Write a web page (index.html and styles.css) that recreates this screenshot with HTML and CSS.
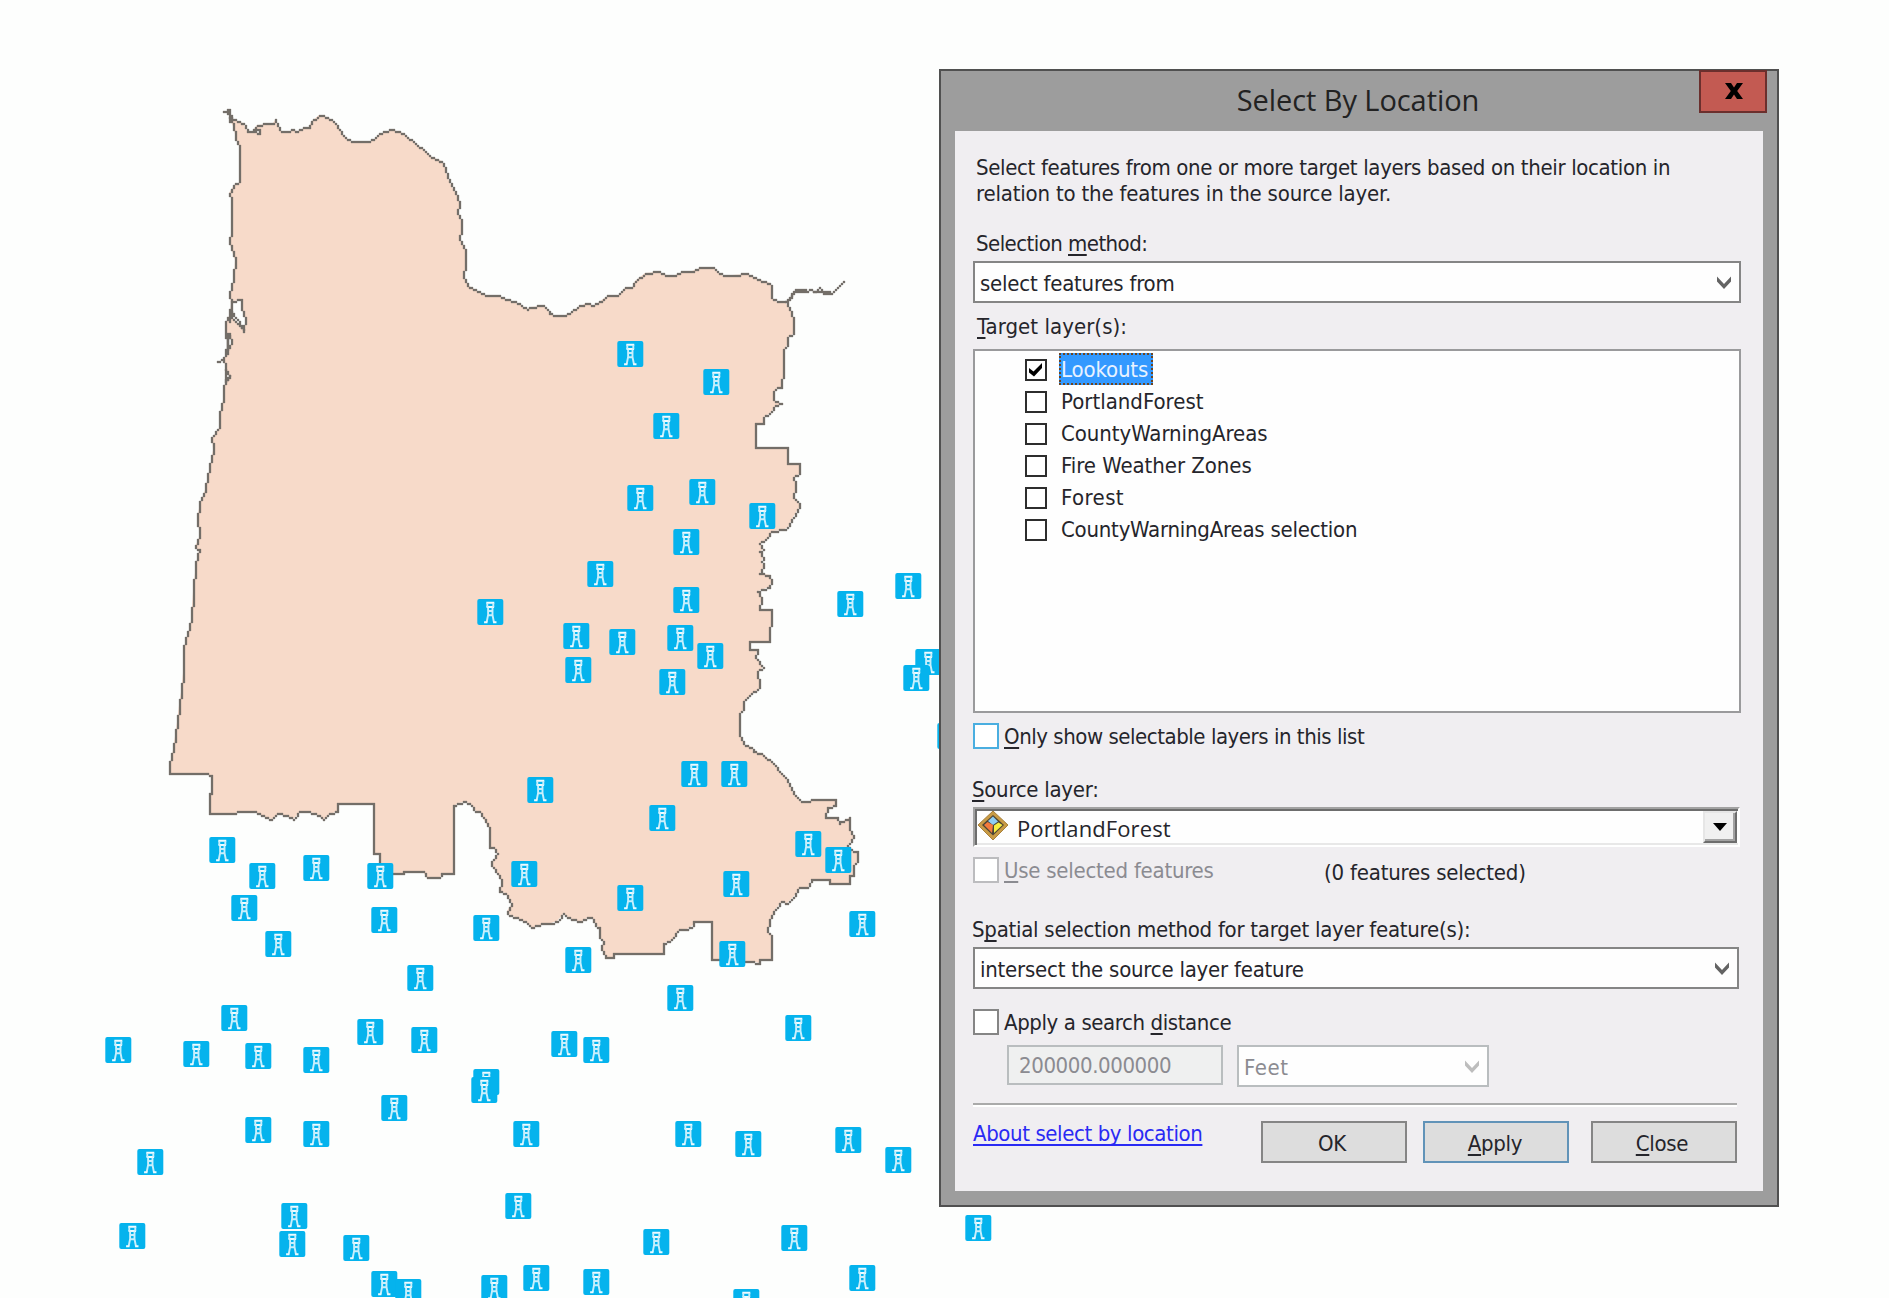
FILE: index.html
```html
<!DOCTYPE html>
<html lang="en">
<head>
<meta charset="utf-8">
<title>Select By Location</title>
<link rel="stylesheet" href="styles.css">
</head>
<body>
<main class="desktop">
<svg class="map" viewBox="0 0 1889 1298" width="1889" height="1298" aria-hidden="true">
  <defs>
    <g id="t">
      <rect class="pin" x="-13" y="-13" width="26" height="26" rx="2"/>
      <path class="tower" d="M-4-9.300H4M-3.800-5H3.800" stroke-width="2"/>
      <path class="tower thin" d="M-3-9V-5M3-9V-5M-2.200-4.500L-2.200 3L-3.600 10M2.200-4.500L2.200 3L3.600 10M-2.400-1H2.400M-2.600 3.200H2.600"/>
      <path class="tower" d="M-6.200 10.200H-2.800M2.800 10.200H6.200" stroke-width="2"/>
    </g>
  </defs>
  <path class="land" data-outline d="M229 118L243 123L247 131L253 132L260 133L259 129L254 129L257 125L268 124L273 123L275 120L277 125L282 132L290 131L292 130L298 131L304 128L309 127L311 122L319 115L321 116L328 117L333 121L340 129L343 135L351 142H368L374 140L380 134L386 132L392 130L397 131L403 133L415 143L423 149L432 157L442 161L446 170L447 177L453 189L458 197L460 204L458 213L462 222V230L460 240L466 250V264L464 278L468 285L477 291L487 296H498L507 300L519 304L527 309L530 307L543 306L547 309L550 314L555 316H563L572 312L580 306L587 303L594 306L603 299L608 296H618L625 288L632 288L635 281L645 273L657 272L667 275L673 276L682 272L692 271L700 268H714L718 272L723 276L732 275L748 274L757 279L770 283L772 287V298L777 302H785L792 312L794 322L793 334L788 337L787 345L784 350V368L782 387L777 388L774 392V400L782 404L776 406L770 413L764 417V424H756V448H788V464H800V473L794 478L796 486L794 497L798 501L800 506L793 517L788 527L783 530L772 531L768 538L760 544L763 549L760 552L763 557L761 562L764 566L760 573L770 575L772 581L769 587L758 591L762 597L759 610H772L770 642H750V649L757 650L756 657L763 667L758 672L760 688L750 695L744 702L743 710L740 713V735L745 745L752 747L753 752L762 753L773 763L780 771L787 780L793 793L801 802L810 802L811 799H836L835 806L828 807L826 818H837L839 823L849 818L850 828L854 837L848 845L853 852H858V861L854 865L853 875L850 876V884H830V880L811 879L808 887L800 888L793 897L787 903L781 902L775 910L770 920L768 932L772 935V960H760L759 963L752 961L712 960V922H693V925L687 929L680 930L672 940L664 943V954H614V958H606L602 948L603 941L600 937V928L596 925L592 918H587L580 922L574 920L568 917L563 914L557 921L551 923L543 924L532 928L527 923L522 920L515 917L507 913V911L512 903L506 893L499 892L502 882L497 873L491 865V862L494 860L498 853L493 848H490V828L487 825L483 818L480 812L476 811L470 803L465 802L458 803L454 806V874H442L439 878H427L423 872H404L403 874H380V854H374V804H338V811L330 814L323 820L319 816L315 813L307 812H300L293 819L287 816L278 814L272 819L262 816L255 812H237L235 814H210V794L212 793V776L207 774H170V763L173 750L175 736L177 722L179 705L181 692L183 673L184 647L188 634L191 620L193 592L196 563L199 550L195 547L200 535L197 519L200 503L205 490L208 476L210 467L213 450L212 438L219 428L220 413L223 400V390L226 380L229 377L226 367L223 360L218 362L224 360L226 352L228 345L226 332V322L230 314L231 304L230 296L234 277L235 260L229 242L232 230V200L229 193L234 185L240 182V148L236 138L233 126L229 118"/>
  <path class="water" data-outline d="M232 301L242 300L241 308L246 320L244 329L232 317L232 301"/>
  <path class="water" data-outline d="M228 334L232 342L228 349L228 334"/>
  <path class="edge" data-outline d="M224 112L230 110L228 114L232 118L228 110L230 122"/>
  <path class="edge" data-outline d="M785 302L795 289H806L808 291L810 289L816 291L820 288L824 293H832L843 282"/>
  <path class="edge" data-outline d="M787 302L796 291H806M814 291H820M824 291H830"/>
  <path class="edge" data-outline d="M244 332L240 322L236 318L232 312L230 322"/>
  <path class="edge" data-outline d="M226 378L230 376L226 382V370"/>
  <path class="edge" data-outline d="M228 354V342L230 334"/>
  <g transform="translate(.3 0)">
    <use href="#t" x="630" y="354"/><use href="#t" x="716" y="382"/><use href="#t" x="666" y="426"/><use href="#t" x="640" y="498"/><use href="#t" x="702" y="492"/><use href="#t" x="762" y="516"/><use href="#t" x="686" y="542"/><use href="#t" x="600" y="574"/><use href="#t" x="686" y="600"/><use href="#t" x="490" y="612"/><use href="#t" x="576" y="636"/><use href="#t" x="622" y="642"/><use href="#t" x="680" y="638"/><use href="#t" x="710" y="656"/><use href="#t" x="578" y="670"/><use href="#t" x="672" y="682"/><use href="#t" x="908" y="586"/><use href="#t" x="850" y="604"/><use href="#t" x="928" y="662"/><use href="#t" x="916" y="678"/><use href="#t" x="950" y="736"/>
    <use href="#t" x="694" y="774"/><use href="#t" x="734" y="774"/><use href="#t" x="662" y="818"/><use href="#t" x="808" y="844"/><use href="#t" x="838" y="860"/><use href="#t" x="736" y="884"/><use href="#t" x="630" y="898"/><use href="#t" x="732" y="954"/><use href="#t" x="862" y="924"/><use href="#t" x="578" y="960"/><use href="#t" x="680" y="998"/><use href="#t" x="540" y="790"/><use href="#t" x="524" y="874"/><use href="#t" x="380" y="876"/><use href="#t" x="384" y="920"/><use href="#t" x="486" y="928"/><use href="#t" x="420" y="978"/>
    <use href="#t" x="222" y="850"/><use href="#t" x="262" y="876"/><use href="#t" x="316" y="868"/><use href="#t" x="244" y="908"/><use href="#t" x="278" y="944"/><use href="#t" x="118" y="1050"/><use href="#t" x="196" y="1054"/><use href="#t" x="234" y="1018"/><use href="#t" x="258" y="1056"/><use href="#t" x="316" y="1060"/><use href="#t" x="370" y="1032"/><use href="#t" x="424" y="1040"/><use href="#t" x="564" y="1044"/><use href="#t" x="596" y="1050"/><use href="#t" x="486" y="1082"/><use href="#t" x="484" y="1090"/><use href="#t" x="394" y="1108"/><use href="#t" x="258" y="1130"/><use href="#t" x="316" y="1134"/><use href="#t" x="526" y="1134"/><use href="#t" x="150" y="1162"/>
    <use href="#t" x="294" y="1216"/><use href="#t" x="292" y="1244"/><use href="#t" x="132" y="1236"/><use href="#t" x="356" y="1248"/><use href="#t" x="518" y="1206"/><use href="#t" x="384" y="1284"/><use href="#t" x="408" y="1292"/><use href="#t" x="494" y="1288"/><use href="#t" x="536" y="1278"/><use href="#t" x="596" y="1282"/><use href="#t" x="798" y="1028"/><use href="#t" x="688" y="1134"/><use href="#t" x="748" y="1144"/><use href="#t" x="848" y="1140"/><use href="#t" x="898" y="1160"/><use href="#t" x="656" y="1242"/><use href="#t" x="794" y="1238"/><use href="#t" x="862" y="1278"/><use href="#t" x="746" y="1302"/><use href="#t" x="978" y="1228"/>
  </g>
</svg>

<section class="dialog">
  <header class="titlebar">
    <h1 class="title">Select By Location</h1>
    <button class="close" aria-label="Close window"><svg width="20" height="18" viewBox="0 0 20 18"><path d="M1 1H7L10 5.500L13 1H19L13.200 9L19 17H13L10 12.500L7 17H1L6.800 9Z"/></svg></button>
  </header>
  <div class="client">
    <p class="intro"><span class="s-intro1">Select features from one or more target layers based on their location in</span><br><span class="s-intro2">relation to the features in the source layer.</span></p>

    <label class="label inset method-label">Selection <u>m</u>ethod:</label>
    <div class="combo method"><span class="s-25">select features from</span><svg class="chev" width="16" height="14" viewBox="0 0 16 14"><path d="M1 .5L8 8L15 .5V5.500L8 13L1 5.500Z"/></svg></div>

    <label class="label inset target-label"><u>T</u>arget layer(s):</label>
    <ul class="list">
      <li class="row"><span class="check"><svg width="18" height="18" viewBox="0 0 18 18"><path d="M2 7L6.500 10.500L15 2V7L7 15.500L2 11.500Z"/></svg></span><span class="name selected">Lookouts</span></li>
      <li class="row"><span class="check"></span><span class="name">PortlandForest</span></li>
      <li class="row"><span class="check"></span><span class="name s-08">CountyWarningAreas</span></li>
      <li class="row"><span class="check"></span><span class="name s-08">Fire Weather Zones</span></li>
      <li class="row"><span class="check"></span><span class="name s-forest">Forest</span></li>
      <li class="row"><span class="check"></span><span class="name s-25">CountyWarningAreas selection</span></li>
    </ul>

    <div class="option only"><span class="box hot"></span><span class="s-only"><u>O</u>nly show selectable layers in this list</span></div>

    <label class="label source-label"><u>S</u>ource layer:</label>
    <div class="source">
      <svg class="layer" width="34" height="32" viewBox="0 0 34 32"><path d="M17 1L32 15L17 30L2 15Z" fill="#c99b45" stroke="#a8803a"/><path d="M17 5L28 15L17 25.500L6 15Z" fill="#4b4436"/><path d="M17 6.500L22 11.500L17 15L12 11Z" fill="#8fcdf2"/><path d="M11.500 12L17 15L16 23L8 15Z" fill="#f47a3c"/><path d="M22.500 12.500L26.500 15L18 23L18 15.500Z" fill="#f6ee3e"/></svg>
      <span class="source-text">PortlandForest</span>
      <span class="drop"><svg width="16" height="9" viewBox="0 0 16 9"><path d="M1 0H15L8 8Z"/></svg></span>
    </div>

    <div class="option used"><span class="box off"></span><span class="dim s-used"><u>U</u>se selected features</span><span class="count">(0 features selected)</span></div>

    <label class="label spatial-label">S<u>p</u>atial selection method for target layer feature(s):</label>
    <div class="combo spatial"><span class="s-25">intersect the source layer feature</span><svg class="chev" width="16" height="14" viewBox="0 0 16 14"><path d="M1 .5L8 8L15 .5V5.500L8 13L1 5.500Z"/></svg></div>

    <div class="option search"><span class="box"></span><span class="s-search">Apply a search <u>d</u>istance</span></div>
    <div class="distance">
      <span class="amount">200000.000000</span>
      <div class="combo unit"><span class="s-feet">Feet</span><svg class="chev" width="16" height="14" viewBox="0 0 16 14"><path d="M1 .5L8 8L15 .5V5.500L8 13L1 5.500Z"/></svg></div>
    </div>

    <hr class="rule">
    <footer class="actions">
      <a class="link">About select by location</a>
      <button class="btn">OK</button>
      <button class="btn default"><u>A</u>pply</button>
      <button class="btn"><u>C</u>lose</button>
    </footer>
  </div>
</section>
</main>
<script src="outline.js"></script>
</body>
</html>
```
FILE: outline.js
```js
// Draws every map boundary as a stepped line on a 2px grid.
const GRID = 2;

// Each entry is [x, y, starts a new line].
function vertices(d) {
  const points = [];
  let x = 0, y = 0;
  for (const [, cmd, args] of d.matchAll(/([MLHV])([^MLHV]*)/g)) {
    const n = args.trim().split(/[ ,]+/).map(Number);
    if (cmd === 'H') x = n[0];
    else if (cmd === 'V') y = n[0];
    else [x, y] = n;
    points.push([Math.round(x / GRID), Math.round(y / GRID), cmd === 'M']);
  }
  return points;
}

for (const shape of document.querySelectorAll('[data-outline]')) {
  const points = vertices(shape.getAttribute('d'));
  const cells = new Set();
  for (let i = 1; i < points.length; i++) {
    const [x0, y0] = points[i - 1], [x1, y1, moved] = points[i];
    if (moved) continue;
    const steps = Math.max(Math.abs(x1 - x0), Math.abs(y1 - y0), 1);
    for (let s = 0; s <= steps; s++) {
      const cx = Math.round(x0 + (x1 - x0) * s / steps);
      const cy = Math.round(y0 + (y1 - y0) * s / steps);
      cells.add(`M${cx * GRID - 1} ${cy * GRID - 1}h2v2h-2z`);
    }
  }
  const line = document.createElementNS('http://www.w3.org/2000/svg', 'path');
  line.setAttribute('class', 'boundary');
  line.setAttribute('d', [...cells].join(''));
  shape.after(line);
}
```
FILE: styles.css
```css
* { box-sizing: border-box; }
body { margin: 0; overflow: hidden; background: #fdfefd; }
.desktop {
  position: relative; width: 1889px; height: 1298px; overflow: hidden;
  font: 22px/26px "DejaVu Sans Condensed", "DejaVu Sans", sans-serif; color: #25252b;
}
.map { display: block; }
.land { fill: #f7dac9; }
.water { fill: #fdfefd; }
.edge { fill: none; }
.boundary { fill: #736e6b; stroke: #736e6b; stroke-width: .3; }
.pin { fill: #05b3ed; }
.tower { fill: none; stroke: #effbff; }
.thin { stroke: #c8effc; stroke-width: 1.9; }

/* window frame */
.dialog {
  position: absolute; left: 939px; top: 69px; width: 840px; height: 1138px;
  background: #9d9d9d; border: 2px solid #505050;
  display: flex; flex-direction: column; padding: 0 14px 14px;
}
.titlebar { flex: none; height: 60px; margin: 0 -4px; display: grid; grid-template-columns: 68px 1fr 68px; }
.title {
  grid-column: 2; margin: 0 2px 0 0; text-align: center; white-space: nowrap;
  font: 400 29px/58px "Open Sans", sans-serif; letter-spacing: -.07px; color: #222;
}
.close {
  height: 43px; margin-top: -1px; padding: 0 0 2px 2px; border: 2px solid #6b2f2d; background: #c35a52;
  display: flex; align-items: center; justify-content: center;
}
.client { flex: 1; background: #f0eef1; padding: 24px 22px 0 18px; display: flex; flex-direction: column; }

u { text-decoration: underline 2px; text-underline-offset: 3px; text-decoration-skip-ink: none; }
.intro { margin: 0 0 0 3px; white-space: nowrap; }
.label { display: block; height: 26px; white-space: nowrap; }
.inset { margin-left: 3px; }
.method-label { margin-top: 24px; letter-spacing: -.55px; }
.target-label { margin-top: 11px; margin-left: 4px; letter-spacing: .05px; }
.source-label { margin-top: 28px; margin-left: -1px; letter-spacing: -.28px; }
.spatial-label { margin-top: 34px; margin-left: -1px; letter-spacing: -.26px; }

.combo {
  height: 42px; border: 2px solid #858585; background: #fefefe;
  padding: 3px 7px 0 5px; display: flex; align-items: center; justify-content: space-between; white-space: nowrap;
}
.method { margin-top: 4px; }
.spatial { margin-top: 4px; width: 766px; }
.chev { fill: #636363; margin-top: -1px; }

/* layer list */
.list { list-style: none; margin: 9px 0 0; padding: 2px 0 0 50px; height: 364px; border: 2px solid #9a9a9c; background: #fefefe; }
.row { height: 32px; display: flex; align-items: center; gap: 12px; }
.check { width: 22px; height: 22px; margin-top: 2px; border: 2px solid #2d2d2d; background: #fff; display: flex; }
.name { height: 32px; line-height: 33px; padding: 0 2px; white-space: nowrap; }
.selected { color: #e8f2ff; background: #3399ff; outline: 2px dotted #6e4520; outline-offset: -2px; padding-right: 5px; letter-spacing: -.15px; }

.option { height: 26px; display: flex; white-space: nowrap; line-height: 28px; }
.box { width: 26px; height: 26px; border: 2px solid #858585; background: #fff; margin-right: 5px; }
.hot { border-color: #4aaee0; }
.off { border-color: #bcbcbf; }
.only { margin-top: 10px; }
.used { margin-top: 10px; }
.search { margin-top: 20px; }
.dim { color: #8b8b91; width: 320px; }
.count { line-height: 32px; letter-spacing: -.2px; }

.source {
  margin-top: 4px; height: 40px; width: 767px; background: #fefefe;
  border: 2px solid; border-color: #a2a2a2 #fff #fff #a2a2a2;
  box-shadow: inset 2px 2px #6d6d6d, inset 0 -2px #e8e8e8;
  display: flex; padding: 2px 1px 2px 1px;
}
.layer { flex: none; margin-top: -1px; }
.source-text { flex: 1; margin-left: 7px; font: 22px/34px "Open Sans", sans-serif; letter-spacing: .1px; }
.drop {
  width: 34px; height: 32px; background: #f0f0f0; display: flex; align-items: center; justify-content: center;
  border: 2px solid; border-color: #e6e6e6 #6d6d6d #6d6d6d #e6e6e6; box-shadow: inset -2px -2px #a2a2a2;
}

.distance { margin: 10px 0 0 34px; display: flex; gap: 14px; color: #8b8b91; }
.amount { width: 216px; height: 40px; border: 2px solid #b9bdbf; background: #eff0f0; padding-left: 10px; line-height: 37px; letter-spacing: -.4px; }
.unit { width: 252px; border-color: #b9bdbf; }
.unit .chev { fill: #bdbdbd; }
.rule { width: 764px; height: 4px; margin: 16px 0 0; border: 0; border-top: 2px solid #aaa; background: #fff; }

.actions { margin-top: 14px; display: flex; gap: 22px; width: 764px; }
.actions .btn:nth-of-type(2) { margin-left: -6px; }
.link {
  color: #2a2af4; margin: 0 auto 0 0; height: 26px; letter-spacing: -.4px; white-space: nowrap;
  text-decoration: underline 2px; text-underline-offset: 3px; text-decoration-skip-ink: none;
}
.btn {
  width: 146px; height: 42px; padding: 3px 4px 0 0; border: 2px solid #858585; background: #dddddd;
  font: inherit; line-height: 26px; color: inherit; letter-spacing: -.3px;
}
.default { border-color: #6193b8; padding-right: 2px; }

.s-intro1 { letter-spacing: -.35px; }
.s-intro2 { letter-spacing: -.19px; }
.s-25 { letter-spacing: -.23px; }
.s-08 { letter-spacing: -.05px; }
.s-forest { letter-spacing: .4px; }
.s-only { letter-spacing: -.46px; }
.s-used { letter-spacing: -.25px; }
.s-search { letter-spacing: -.4px; }
.s-feet { letter-spacing: .6px; }
```
